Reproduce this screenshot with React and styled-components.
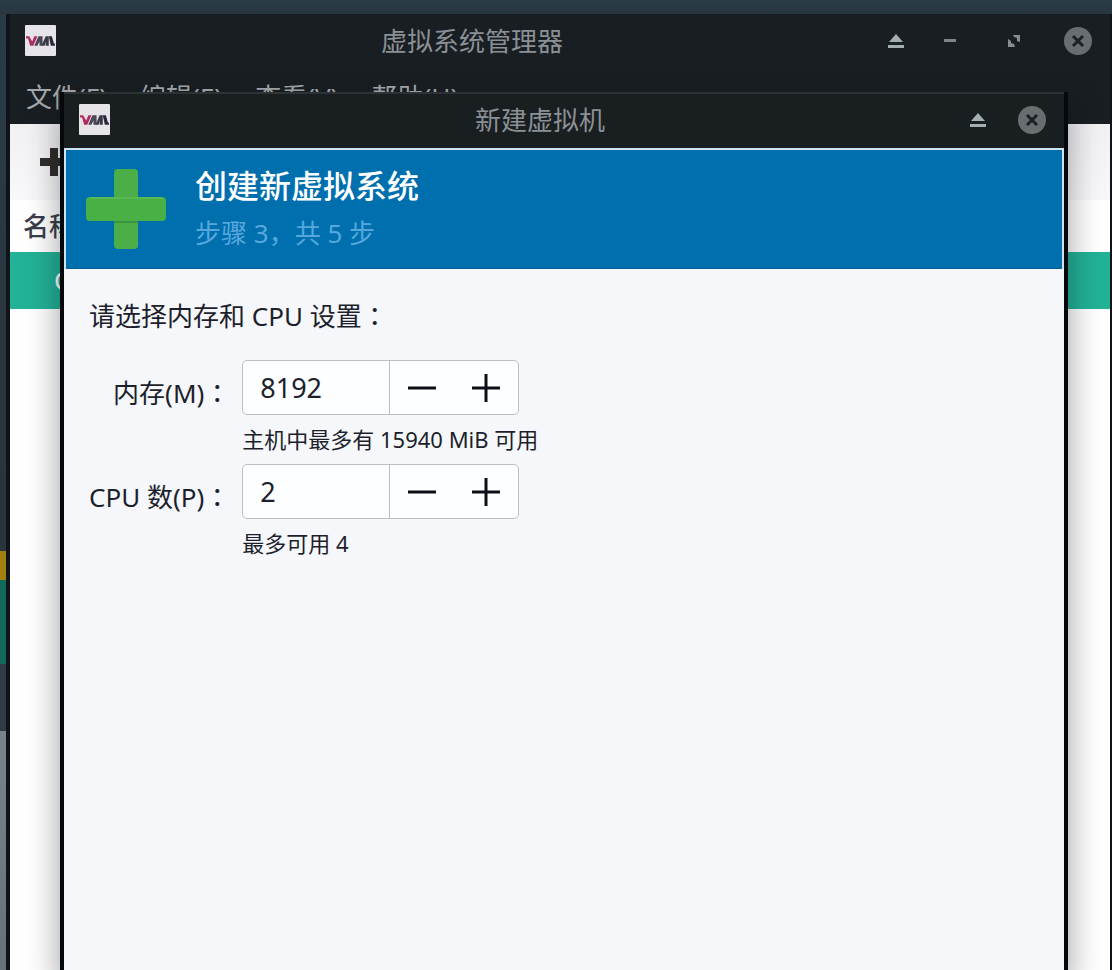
import { useState } from 'react';
import styled, { createGlobalStyle } from 'styled-components';

const GlobalStyle = createGlobalStyle`
  * {
    box-sizing: border-box;
  }

  body {
    margin: 0;
    font-family: 'Noto Sans', 'Noto Sans CJK SC', sans-serif;
    font-size: 26px;
    color: #1d1f2c;
  }

  button,
  input {
    font: inherit;
    color: inherit;
  }
`;

const menus = ['文件(F)', '编辑(E)', '查看(V)', '帮助(H)'];

function Logo() {
  return (
    <LogoBox viewBox="0 0 30 30" aria-hidden="true">
      <rect width="30" height="30" rx="1" fill="#e6e4e8" />
      <path d="M1 11h3l3 5 2-5h3l-4 9H5L3 13H1z" fill="#b02a60" />
      <path d="M13 11h4v9h-3v-4l-2 4H9z" fill="#4a4757" />
      <path d="M20 11h3v9h-3v-4l-1 4h-3z" fill="#3a3747" />
      <path d="M23 11h3l2 7h1v2h-4z" fill="#2a2838" />
    </LogoBox>
  );
}

function EjectButton() {
  return (
    <Eject type="button" aria-label="卷起">
      <svg width="16" height="16" viewBox="0 0 16 16" fill="#a3aeb1">
        <path d="M8 1l7 8H1z" />
        <path d="M0 12h16v3H0z" />
      </svg>
    </Eject>
  );
}

function CloseButton() {
  return (
    <WindowButton type="button" aria-label="关闭">
      <svg width="28" height="28" viewBox="0 0 28 28">
        <circle cx="14" cy="14" r="14" fill="#696d70" />
        <path d="M9 9l10 10M19 9L9 19" stroke="#1b2024" strokeWidth="3" />
      </svg>
    </WindowButton>
  );
}

function SpinField({ id, label, hint, value, onChange }) {
  return (
    <>
      <FieldLabel htmlFor={id}>
        {label}
        <Colon>：</Colon>
      </FieldLabel>
      <Spin>
        <SpinInput
          id={id}
          inputMode="numeric"
          value={value}
          onChange={(e) => onChange(Number(e.target.value) || 0)}
        />
        <SpinButton type="button" aria-label="减少" onClick={() => onChange(value - 1)}>
          <svg width="28" height="28" viewBox="0 0 28 28" stroke="#0d0f16" strokeWidth="3">
            <path d="M0 14h28" />
          </svg>
        </SpinButton>
        <SpinButton type="button" aria-label="增加" onClick={() => onChange(value + 1)}>
          <svg width="28" height="28" viewBox="0 0 28 28" stroke="#0d0f16" strokeWidth="3">
            <path d="M0 14h28M14 0v28" />
          </svg>
        </SpinButton>
      </Spin>
      <Hint>{hint}</Hint>
    </>
  );
}

function ManagerWindow() {
  return (
    <Manager>
      <TitleBar>
        <Logo />
        <Title>虚拟系统管理器</Title>
        <EjectButton />
        <WindowButtons>
          <WindowButton type="button" aria-label="最小化">
            <svg width="12" height="4" viewBox="0 0 12 4">
              <path d="M0 0h12v3H0z" fill="#7d8588" />
            </svg>
          </WindowButton>
          <WindowButton type="button" aria-label="最大化">
            <svg width="12" height="12" viewBox="0 0 12 12" fill="#858d90">
              <path d="M5 0h7v7l-3-1V3L6 2z" />
              <path d="M0 4l3 2v2l3 1 1 3H0z" />
            </svg>
          </WindowButton>
          <CloseButton />
        </WindowButtons>
      </TitleBar>
      <MenuBar>
        {menus.map((menu) => (
          <MenuItem type="button" key={menu}>{menu}</MenuItem>
        ))}
      </MenuBar>
      <ManagerBody>
        <Toolbar>
          <ToolButton type="button" aria-label="新建">
            <svg width="28" height="28" viewBox="0 0 28 28" fill="#302e2c">
              <path d="M10 0h8v10h10v8H18v10h-8V18H0v-8h10z" />
            </svg>
          </ToolButton>
        </Toolbar>
        <ListHead>名称</ListHead>
        <ListRow>C</ListRow>
      </ManagerBody>
    </Manager>
  );
}

function NewMachineDialog() {
  const [memory, setMemory] = useState(8192);
  const [cpus, setCpus] = useState(2);

  return (
    <Dialog role="dialog" aria-label="新建虚拟机">
      <DialogTitleBar>
        <Logo />
        <Title>新建虚拟机</Title>
        <EjectButton />
        <CloseButton />
      </DialogTitleBar>
      <DialogContent>
        <Banner>
          <svg width="80" height="80" viewBox="0 0 80 80" aria-hidden="true">
            <rect x="28" width="24" height="80" rx="4" fill="#4bae49" />
            <rect x="28" y="50" width="24" height="4" fill="#3b9440" />
            <rect y="28" width="80" height="24" rx="4" fill="#49b045" />
            <path d="M4 29h72" stroke="#6cc263" strokeWidth="1" />
          </svg>
          <div>
            <Heading>创建新虚拟系统</Heading>
            <Step>步骤 3，共 5 步</Step>
          </div>
        </Banner>
        <Form>
          <Prompt>请选择内存和 CPU 设置<Colon>：</Colon></Prompt>
          <Fields>
            <SpinField
              id="memory"
              label="内存(M)"
              hint="主机中最多有 15940 MiB 可用"
              value={memory}
              onChange={setMemory}
            />
            <SpinField
              id="cpus"
              label="CPU 数(P)"
              hint="最多可用 4"
              value={cpus}
              onChange={setCpus}
            />
          </Fields>
        </Form>
      </DialogContent>
    </Dialog>
  );
}

function App() {
  return (
    <>
      <GlobalStyle />
      <Desktop>
        <ManagerWindow />
        <NewMachineDialog />
      </Desktop>
    </>
  );
}

export default App;

const Desktop = styled.main`
  position: relative;
  display: flex;
  min-height: 100vh;
  padding: 14px 0 0 6px;
  overflow: hidden;
  /* wallpaper stripes */
  background:
    linear-gradient(#2a3d47, #28353f) top / 100% 14px no-repeat,
    linear-gradient(
      #2a3b46 0,
      #29343d 551px,
      #a1800f 551px,
      #a1800f 580px,
      #0f6a5b 580px,
      #0f6a5b 664px,
      #2f3b47 664px,
      #2f3b47 731px,
      #78838c 731px,
      #66727b 100%
    );
`;

const Manager = styled.section`
  flex: 1;
  display: flex;
  flex-direction: column;
  border: solid #101418;
  border-width: 0 2px 0 4px;
  background: #191e22;
`;

const TitleBar = styled.header`
  display: flex;
  align-items: center;
  height: 53px;
  padding: 0 18px 0 15px;
`;

const DialogTitleBar = styled(TitleBar)`
  height: 55px;
`;

const LogoBox = styled.svg`
  width: 31px;
  height: 31px;
`;

const Title = styled.h1`
  flex: 1;
  margin: 0;
  font-size: 26px;
  font-weight: 400;
  line-height: 40px;
  text-align: center;
  color: #8b9096;
`;

const WindowButtons = styled.div`
  display: flex;
  gap: 36px;
`;

const WindowButton = styled.button`
  display: flex;
  align-items: center;
  justify-content: center;
  width: 28px;
  height: 28px;
  padding: 0;
  border: 0;
  background: none;
`;

const Eject = styled(WindowButton)`
  width: 16px;
  margin-right: 32px;
`;

const MenuBar = styled.nav`
  display: flex;
  gap: 33px;
  height: 57px;
  padding: 10px 16px 0;
`;

const MenuItem = styled.button`
  padding: 0;
  border: 0;
  background: none;
  line-height: 40px;
  height: 40px;
  white-space: nowrap;
  color: #a4a8ab;
`;

const ManagerBody = styled.div`
  flex: 1;
  background: #ffffff;
`;

const Toolbar = styled.div`
  display: flex;
  align-items: center;
  height: 76px;
  padding: 0 30px;
  background: linear-gradient(#f1f1f4, #f8f8fa);
`;

const ToolButton = styled.button`
  display: flex;
  padding: 0;
  border: 0;
  background: none;
`;

const ListHead = styled.div`
  padding: 0 13px;
  font-weight: 500;
  line-height: 52px;
  color: #3a3d47;
`;

const ListRow = styled.div`
  padding: 0 44px;
  line-height: 57px;
  color: #ffffff;
  background: #22b297;
`;

const Dialog = styled.section`
  position: absolute;
  top: 92px;
  right: 44px;
  bottom: 0;
  left: 60px;
  display: flex;
  flex-direction: column;
  border: solid #05090d;
  border-width: 0 4px;
  background: #191e20;
  box-shadow: 0 16px 30px 2px rgba(10, 14, 20, 0.36), inset 0 2px #2d3235;
`;

const DialogContent = styled.div`
  flex: 1;
  padding: 2px 2px 0;
  border-top: 1px solid #191e20;
  background: linear-gradient(#cfe2f0 0, #cfe2f0 121px, #f5f7fa 121px);
`;

const Banner = styled.div`
  display: flex;
  align-items: center;
  gap: 29px;
  height: 119px;
  padding: 0 20px;
  border-bottom: 1px solid #0a5f99;
  background: #006fae;
`;

const Heading = styled.h2`
  margin: 0;
  font-size: 32px;
  font-weight: 500;
  line-height: 48px;
  color: #ffffff;
`;

const Step = styled.p`
  margin: 0;
  line-height: 46px;
  color: #56a8dc;
`;

/* this family centres the full-width colon in its cell */
const Colon = styled.span`
  font-family: 'Noto Sans CJK TC', sans-serif;
`;

const Form = styled.form`
  padding: 26px 23px;
`;

const Prompt = styled.p`
  margin: 0 0 24px;
  line-height: 40px;
`;

const Fields = styled.div`
  display: grid;
  grid-template-columns: max-content 1fr;
  column-gap: 12px;
`;

const FieldLabel = styled.label`
  align-self: end;
  text-align: right;
  line-height: 44px;
  white-space: nowrap;
`;

const Spin = styled.div`
  display: flex;
  width: 277px;
  height: 55px;
  border: 1px solid #b9bec3;
  border-radius: 5px;
  background: #fcfeff;
`;

const SpinInput = styled.input`
  flex: 1;
  min-width: 0;
  padding: 0 17px;
  border: 0;
  border-right: 1px solid #b9bec3;
  outline: 0;
  background: none;
  font-size: 27px;
`;

const SpinButton = styled.button`
  display: flex;
  align-items: center;
  justify-content: center;
  width: 64px;
  padding: 0;
  border: 0;
  background: none;
`;

const Hint = styled.p`
  grid-column: 2;
  margin: 0;
  font-size: 22px;
  line-height: 49px;
`;
